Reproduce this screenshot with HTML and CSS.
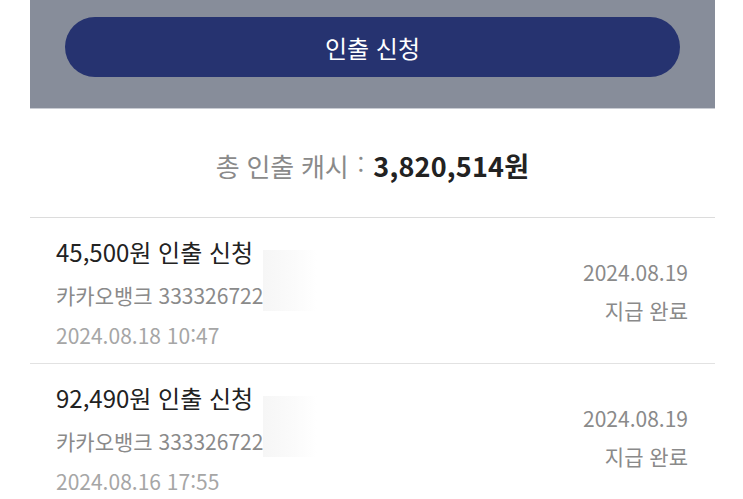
FILE: index.html
```html
<!DOCTYPE html>
<html lang="ko">
<head>
  <meta charset="UTF-8"/>
  <meta name="viewport" content="width=device-width, initial-scale=1"/>
  <title>인출 내역</title>
  <link rel="stylesheet" href="styles.css">
</head>
<body>

  <div class="page">
    <div class="action-bar">
      <button class="btn-withdraw">인출 신청</button>
    </div>

    <div class="summary">
      <span class="summary-label">총 인출 캐시</span>
      <span class="summary-colon">:</span>
      <span class="summary-amount">3,820,514원</span>
    </div>

    <ul class="history">
      <li class="item">
        <div class="item-info">
          <div class="item-title">45,500원 인출 신청</div>
          <div class="item-bank">카카오뱅크 333326722</div>
          <div class="item-date">2024.08.18 10:47</div>
          <span class="mask"></span>
        </div>
        <div class="item-status">
          <div>2024.08.19</div>
          <div>지급 완료</div>
        </div>
      </li>
      <li class="item">
        <div class="item-info">
          <div class="item-title">92,490원 인출 신청</div>
          <div class="item-bank">카카오뱅크 333326722</div>
          <div class="item-date">2024.08.16 17:55</div>
          <span class="mask"></span>
        </div>
        <div class="item-status">
          <div>2024.08.19</div>
          <div>지급 완료</div>
        </div>
      </li>
    </ul>
  </div>

</body>
</html>
```

FILE: styles.css
```css
/* --- Reset & Body --- */
* { box-sizing: border-box; margin: 0; padding: 0; }
html, body { width: 100%; height: 100%; overflow: hidden; }
body {
  background: #ffffff;
  font-family: "Noto Sans CJK KR", "Noto Sans", sans-serif;
  color: #222;
}

.page {
  padding: 0 28px 0 30px;
}

/* --- Top action bar --- */
.action-bar {
  height: 109px;
  padding: 17px 35px 0;
  background: #878d9a;
  border-bottom: 1px solid #c9ccd3;
}
.btn-withdraw {
  display: block;
  width: 100%;
  height: 60px;
  border: 0;
  border-radius: 30px;
  background: #263370;
  color: #ffffff;
  font-family: inherit;
  font-size: 24px;
}

/* --- Total summary --- */
.summary {
  height: 109px;
  display: flex; align-items: center; justify-content: center;
  gap: 9px;
  padding-top: 4px;
  border-bottom: 1px solid #dcdcdc;
}
.summary-label { font-size: 26px; color: #8a8a8a; letter-spacing: -0.2px; }
.summary-colon { font-size: 24px; color: #8a8a8a; margin-top: -3px; }
.summary-amount { font-size: 27px; font-weight: 700; color: #222; letter-spacing: 0.2px; }

/* --- History list --- */
.history { list-style: none; }
.item {
  display: flex; align-items: center; justify-content: space-between;
  height: 146px;
  padding: 0 27px 0 26px;
  border-bottom: 1px solid #e2e2e2;
}
.item-info {
  position: relative;
  padding-top: 7px;
}
.item-title {
  font-size: 24px; line-height: 32px;
  color: #222;
}
.item-bank {
  margin-top: 10px;
  font-size: 21px; line-height: 34px;
  color: #8a8a8a;
}
.item-date {
  margin-top: 6px;
  font-size: 21px; line-height: 34px;
  color: #a6a6a6;
}

/* blurred-out patch over the account number */
.mask {
  position: absolute;
  top: 21px; left: 207px;
  width: 54px; height: 61px;
  background: linear-gradient(90deg, #f6f6f6 0%, #fafafa 50%, #ffffff 100%);
}

.item-status {
  display: flex; flex-direction: column; align-items: flex-end;
  gap: 4px;
  font-size: 21px; line-height: 34px;
  color: #8a8a8a;
}
```
